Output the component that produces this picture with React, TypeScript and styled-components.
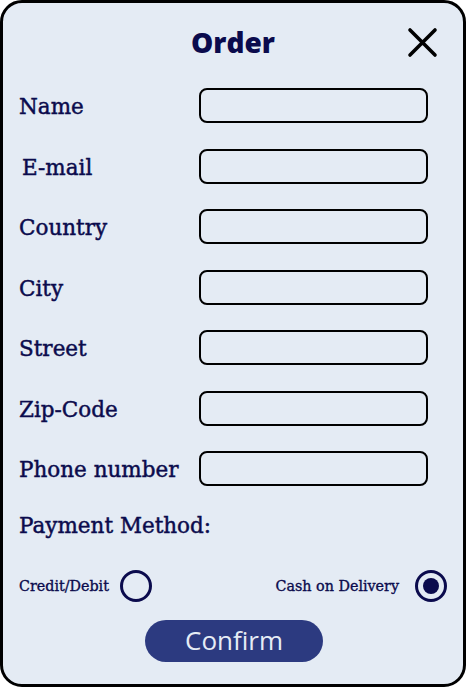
import React from "react";
import styled, { createGlobalStyle } from "styled-components";

const Global = createGlobalStyle`
  html, body { margin: 0; padding: 0; background: #ffffff; }
  * { box-sizing: border-box; }
`;

const NAVY = "#0b0b4d";

const Card = styled.div`
  width: 466px;
  height: 687px;
  border: 3px solid #000;
  border-radius: 22px;
  background: #e4ebf4;
  padding: 0 16px;
  display: flex;
  flex-direction: column;
`;

const Header = styled.div`
  position: relative;
  height: 78px;
  display: flex;
  align-items: center;
  justify-content: center;
  margin-bottom: 7px;
`;

const Title = styled.h1`
  margin: 0;
  font-family: "Open Sans", sans-serif;
  font-weight: 800;
  font-size: 28px;
  color: ${NAVY};
  line-height: 1;
`;

const CloseButton = styled.button`
  position: absolute;
  right: 9px;
  top: 24px;
  width: 31px;
  height: 31px;
  padding: 0;
  border: none;
  background: none;
  display: flex;
  align-items: center;
  justify-content: center;
  cursor: pointer;
`;

const Fields = styled.div`
  display: grid;
  grid-template-columns: 180px 229px;
  row-gap: 25.5px;
  align-items: center;
`;

const Label = styled.label<{ $indent?: number }>`
  font-family: "DejaVu Serif", serif;
  font-size: 21.5px;
  color: ${NAVY};
  -webkit-text-stroke: 0.45px ${NAVY};
  padding-left: ${(p) => p.$indent ?? 0}px;
  padding-top: 2px;
  white-space: nowrap;
`;

const Input = styled.input`
  width: 229px;
  height: 35px;
  border: 2px solid #000;
  border-radius: 8px;
  background: transparent;
  outline: none;
`;

const Section = styled.div`
  margin-top: 25px;
  font-family: "DejaVu Serif", serif;
  font-size: 21.5px;
  line-height: 30px;
  color: ${NAVY};
  -webkit-text-stroke: 0.45px ${NAVY};
`;

const RadioRow = styled.div`
  margin-top: 29px;
  height: 32px;
  display: flex;
  align-items: center;
  justify-content: space-between;
`;

const RadioGroup = styled.label<{ $gap: number }>`
  display: flex;
  align-items: center;
  gap: ${(p) => p.$gap}px;
  font-family: "DejaVu Serif", serif;
  font-size: 14.3px;
  color: ${NAVY};
  -webkit-text-stroke: 0.35px ${NAVY};
`;

const Radio = styled.span<{ $checked?: boolean }>`
  width: 32px;
  height: 32px;
  border: 3px solid ${NAVY};
  border-radius: 50%;
  display: flex;
  align-items: center;
  justify-content: center;
  &::after {
    content: "";
    width: 16px;
    height: 16px;
    border-radius: 50%;
    background: ${(p) => (p.$checked ? NAVY : "transparent")};
  }
`;

const ButtonRow = styled.div`
  margin-top: 18px;
  display: flex;
  justify-content: center;
  padding-left: 2px;
`;

const ConfirmButton = styled.button`
  width: 178px;
  height: 42px;
  border: none;
  border-radius: 21px;
  background: #2c3a80;
  color: #e6ecf5;
  font-family: "Open Sans", sans-serif;
  font-size: 26px;
  line-height: 1;
  padding: 0 0 2px;
  cursor: pointer;
`;

const fields: { label: string; indent?: number }[] = [
  { label: "Name" },
  { label: "E-mail", indent: 3 },
  { label: "Country" },
  { label: "City" },
  { label: "Street" },
  { label: "Zip-Code" },
  { label: "Phone number" },
];

export default function App() {
  return (
    <>
      <Global />
      <Card>
        <Header>
          <Title>Order</Title>
          <CloseButton aria-label="Close">
            <svg width="31" height="31" viewBox="0 0 31 31">
              <path
                d="M3 3 L28 28 M28 3 L3 28"
                stroke="#000"
                strokeWidth="3.6"
                strokeLinecap="round"
                fill="none"
              />
            </svg>
          </CloseButton>
        </Header>
        <Fields>
          {fields.map((f) => (
            <React.Fragment key={f.label}>
              <Label $indent={f.indent}>{f.label}</Label>
              <Input />
            </React.Fragment>
          ))}
        </Fields>
        <Section>Payment Method:</Section>
        <RadioRow>
          <RadioGroup $gap={11}>
            Credit/Debit
            <Radio />
          </RadioGroup>
          <RadioGroup $gap={16}>
            Cash on Delivery
            <Radio $checked />
          </RadioGroup>
        </RadioRow>
        <ButtonRow>
          <ConfirmButton>Confirm</ConfirmButton>
        </ButtonRow>
      </Card>
    </>
  );
}
